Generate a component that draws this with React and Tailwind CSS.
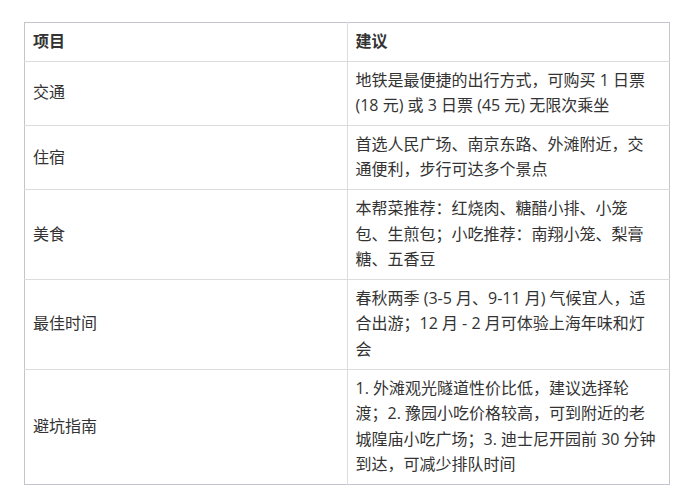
export default function App() {
  const rows = [
    ["交通", ["地铁是最便捷的出行方式，可购买 1 日票", "(18 元) 或 3 日票 (45 元) 无限次乘坐"]],
    ["住宿", ["首选人民广场、南京东路、外滩附近，交", "通便利，步行可达多个景点"]],
    ["美食", ["本帮菜推荐：红烧肉、糖醋小排、小笼", "包、生煎包；小吃推荐：南翔小笼、梨膏", "糖、五香豆"]],
    ["最佳时间", ["春秋两季 (3-5 月、9-11 月) 气候宜人，适", "合出游；12 月 - 2 月可体验上海年味和灯", "会"]],
    ["避坑指南", ["1. 外滩观光隧道性价比低，建议选择轮", "渡；2. 豫园小吃价格较高，可到附近的老", "城隍庙小吃广场；3. 迪士尼开园前 30 分钟", "到达，可减少排队时间"]],
  ];
  return (
    <div
      className="w-[690px] h-[500px] bg-white pt-[22px] pl-[24px] text-[#333] text-[16px] leading-[25.6px]"
      style={{ fontFamily: '"Open Sans", "Noto Sans CJK SC", sans-serif' }}
    >
      <table className="w-[646px] table-fixed border-collapse border border-[#c4c4cc]">
        <thead>
          <tr>
            <th className="w-1/2 text-left font-bold border-r border-b border-[#dcdcdc] px-[8px] py-[6px]">项目</th>
            <th className="w-1/2 text-left font-bold border-b border-[#dcdcdc] px-[8px] py-[6px]">建议</th>
          </tr>
        </thead>
        <tbody>
          {rows.map(([k, lines], i) => (
            <tr key={k}>
              <td className={`align-middle border-r border-[#dcdcdc] px-[8px] py-[6px] ${i < rows.length - 1 ? "border-b" : ""}`}>{k}</td>
              <td className={`align-top border-[#dcdcdc] px-[8px] py-[6px] whitespace-nowrap ${i < rows.length - 1 ? "border-b" : ""}`}>
                {lines.map((l, j) => (
                  <div key={j}>{l}</div>
                ))}
              </td>
            </tr>
          ))}
        </tbody>
      </table>
    </div>
  );
}
